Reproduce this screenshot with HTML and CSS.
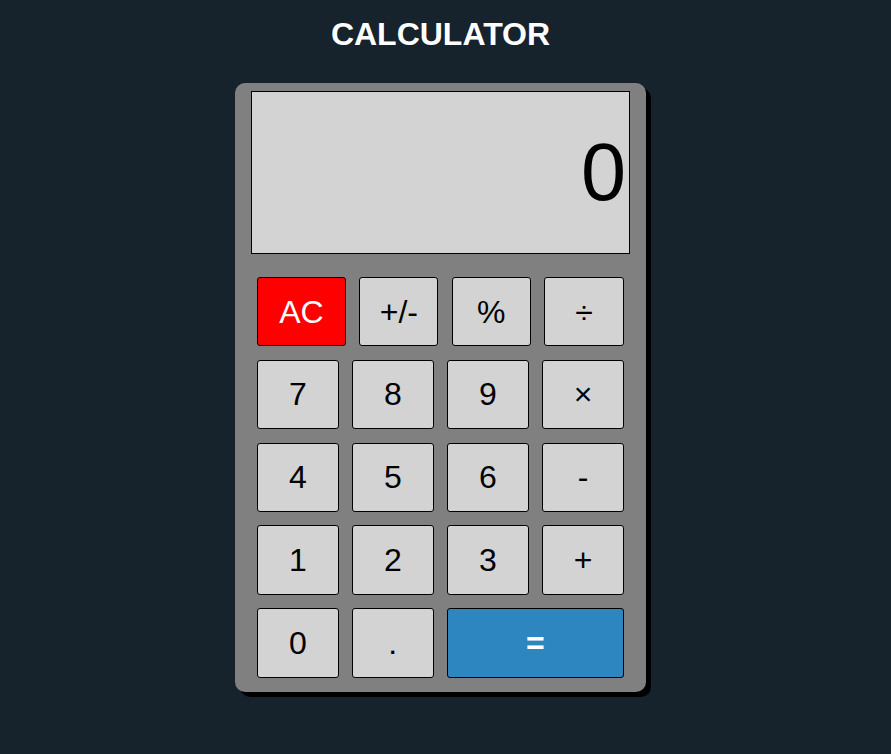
FILE: index.html
```html
<!DOCTYPE html>
<html lang="en">
<head>
<meta charset="utf-8">
<title>Calculator</title>
<link rel="stylesheet" href="styles.css">
</head>
<body>
  <h1 class="title">CALCULATOR</h1>
  <div class="calc">
    <div class="display">0</div>
    <div class="keys">
      <div class="row">
        <button class="key key-ac">AC</button>
        <button class="key key-op1">+/-</button>
        <button class="key key-op1">%</button>
        <button class="key key-op2">÷</button>
      </div>
      <div class="row">
        <button class="key">7</button>
        <button class="key">8</button>
        <button class="key">9</button>
        <button class="key">×</button>
      </div>
      <div class="row">
        <button class="key">4</button>
        <button class="key">5</button>
        <button class="key">6</button>
        <button class="key">-</button>
      </div>
      <div class="row">
        <button class="key">1</button>
        <button class="key">2</button>
        <button class="key">3</button>
        <button class="key">+</button>
      </div>
      <div class="row">
        <button class="key">0</button>
        <button class="key">.</button>
        <button class="key key-eq">=</button>
      </div>
    </div>
  </div>
</body>
</html>
```

FILE: styles.css
```css
html {
  background: #16222c;
  min-height: 100%;
}

body {
  margin: 0;
  padding: 16px 10px 40px 0;
  font-family: "Liberation Sans", Arial, sans-serif;
}

.title {
  margin: 0 0 30px;
  text-align: center;
  color: #ffffff;
  font-size: 32px;
  font-weight: bold;
  line-height: normal;
}

.calc {
  width: 379px;
  margin: 0 auto;
  padding: 8px 16px 14.3px;
  background: #808080;
  border-radius: 10px;
  box-shadow: 5px 5px 0 0 #000000;
}

.display {
  box-sizing: border-box;
  height: 163px;
  border: 1px solid #000000;
  background: #d3d3d3;
  display: flex;
  align-items: center;
  justify-content: flex-end;
  padding-right: 3px;
  font-size: 81px;
  color: #000000;
  line-height: normal;
}

.keys {
  margin-top: 23px;
  padding: 0 6px;
  display: flex;
  flex-direction: column;
  gap: 13.4px;
}

.row {
  display: flex;
  justify-content: space-between;
}

.key {
  box-sizing: border-box;
  width: 82px;
  height: 69.4px;
  margin: 0;
  padding: 0;
  border: 1px solid #000000;
  border-radius: 3px;
  background: #d3d3d3;
  color: #000000;
  font-family: "Liberation Sans", Arial, sans-serif;
  font-size: 32px;
  line-height: 1;
}

.key-ac {
  width: 89px;
  background: #ff0000;
  color: #ffffff;
}

.key-op1 {
  width: 79px;
}

.key-op2 {
  width: 80px;
}

.key-eq {
  width: 177.4px;
  background: #2e86c1;
  color: #ffffff;
  font-weight: bold;
}
```
